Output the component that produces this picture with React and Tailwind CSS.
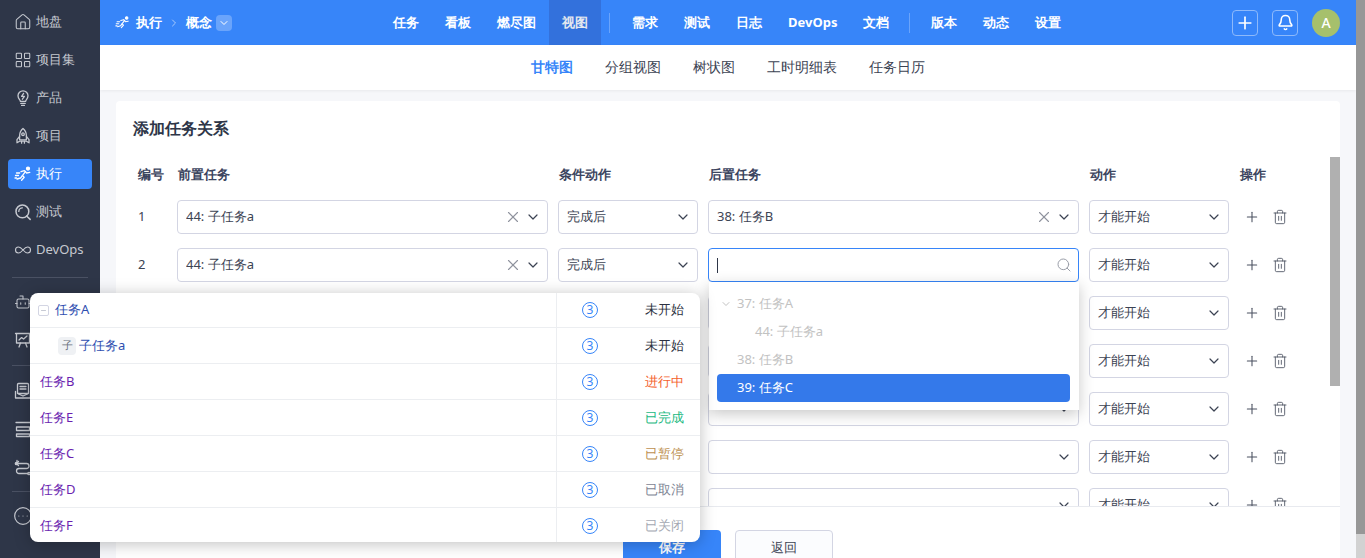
import React from "react";
import {
  Home,
  LayoutGrid,
  Infinity as InfinityIcon,
  Bot,
  Search,
  CircleEllipsis,
  ChevronDown,
  ChevronRight,
  X,
  Plus,
  Trash2,
  Bell,
  Minus,
} from "lucide-react";

const FONT = "font-['Roboto','Noto_Sans_CJK_SC',sans-serif]";

function Icon({ size = 18, children }) {
  return (
    <svg width={size} height={size} viewBox="0 0 18 18" fill="none" stroke="currentColor" strokeWidth="1.3" strokeLinecap="round" strokeLinejoin="round" className="shrink-0">
      {children}
    </svg>
  );
}

// sprinter used for 执行
function Runner({ size = 18 }) {
  return (
    <Icon size={size}>
      <circle cx="14" cy="3.6" r="1.5" fill="currentColor" />
      <path d="M15.8 7.4 12.6 8 10.4 5.6 7 6.6" />
      <path d="M11.6 6.4 8.4 10.6l1.8 1.6-2.6 3" />
      <path d="M8.4 10.6 6.6 13 3 14" />
      <path d="M1.5 10.5h3M2.5 8h3.2M1 13h1.5" />
    </Icon>
  );
}

function Bulb() {
  return (
    <Icon>
      <path d="M6.4 12.4c0-1.4-2.4-2.6-2.4-5.6a5 5 0 0 1 10 0c0 3-2.4 4.2-2.4 5.6z" />
      <path d="M9.6 4.4 7.6 7.4h2.8l-2 2.8" />
      <path d="M6.8 14.4h4.4M7.6 16.4h2.8" />
    </Icon>
  );
}

function UprightRocket() {
  return (
    <Icon>
      <path d="M9 1.4c2.4 2 3.4 4.6 3.4 7.2v4.2H5.6V8.6C5.6 6 6.6 3.4 9 1.4z" />
      <circle cx="9" cy="7.2" r="1.3" />
      <path d="M5.6 9.4 3 12.6v3.2l2.6-1.6h6.8l2.6 1.6v-3.2l-2.6-3.2" />
      <path d="M7.6 14.4v1.8M10.4 14.4v1.8" />
    </Icon>
  );
}

function TestLens() {
  return (
    <Icon>
      <circle cx="8.4" cy="8.4" r="6.4" strokeWidth="1.5" />
      <path d="M4.8 8.4a3.6 3.6 0 0 1 3.6-3.6" />
      <path d="m12.6 13 3.6 3.4" strokeWidth="1.5" />
    </Icon>
  );
}

function Board() {
  return (
    <Icon>
      <path d="M1.5 2.5h15M2.5 2.5v9.5h13V2.5" />
      <path d="m5 9 2.6-2.4 2 1.4L13 5" />
      <path d="M6.5 12 5 16M11.5 12l1.5 4" />
    </Icon>
  );
}

function Tray() {
  return (
    <Icon>
      <rect x="3.5" y="1.5" width="11" height="10" rx="1" />
      <path d="M6 4.5h6M6 7h6" />
      <path d="M1.5 9.5v6.5h15V9.5M3.5 11.5 9 14l5.5-2.5" />
    </Icon>
  );
}

function Stack() {
  return (
    <Icon>
      <path d="M2 2.5h14M2.5 7h13v3.5h-13zM2.5 14h13v2.5h-13z" />
    </Icon>
  );
}

function Flow() {
  return (
    <Icon>
      <path d="M3 2.5v1.5M3 5.5h9.5a2.5 2.5 0 0 1 0 5H5a2.5 2.5 0 0 0 0 5h9" />
      <circle cx="2.5" cy="5.5" r="1.2" fill="currentColor" />
      <circle cx="15" cy="15.5" r="1.2" />
      <path d="M4.5 3.5 2.5 5.5l2 2" />
    </Icon>
  );
}

const menus = [
  { name: "地盘", icon: <Home size={18} strokeWidth={1.4} /> },
  { name: "项目集", icon: <LayoutGrid size={18} strokeWidth={1.4} /> },
  { name: "产品", icon: <Bulb /> },
  { name: "项目", icon: <UprightRocket /> },
  { name: "执行", icon: <Runner />, active: true },
  { name: "测试", icon: <TestLens /> },
  { name: "DevOps", icon: <InfinityIcon size={18} strokeWidth={1.5} />, latin: true },
];

function SideItem({ item }) {
  return (
    <div className={`mx-2 h-[30px] mb-2 shrink-0 flex items-center gap-[4px] pl-[6px] rounded text-[13px] ${item.latin ? "font-normal" : "font-medium"} ${item.active ? "bg-[#3785f9] text-white" : "text-[#c6c9d0]"}`}>
      {item.icon}
      {item.name && <span>{item.name}</span>}
    </div>
  );
}

// icons only below this point: their labels sit behind the task popup
function Sidebar() {
  return (
    <div className="w-[100px] shrink-0 h-full bg-[#2e3648] pt-[7px] flex flex-col">
      {menus.map((m) => <SideItem key={m.name} item={m} />)}
      <div className="mx-3 border-t border-[#4a5163] mt-[4px] mb-[9px]" />
      <SideItem item={{ icon: <Bot size={18} strokeWidth={1.4} /> }} />
      <SideItem item={{ icon: <Board /> }} />
      <div className="mx-3 border-t border-[#4a5163] mt-[2px] mb-[10px]" />
      <SideItem item={{ icon: <Tray /> }} />
      <SideItem item={{ icon: <Stack /> }} />
      <SideItem item={{ icon: <Flow /> }} />
      <div className="mx-3 border-t border-[#4a5163] mt-[1px]" />
      <div className="pl-[13px] pt-[14px] text-[#c6c9d0]"><CircleEllipsis size={20} strokeWidth={1.4} /></div>
    </div>
  );
}

function TopNav() {
  const group1 = ["任务", "看板", "燃尽图", "视图"];
  const group2 = ["需求", "测试", "日志", "DevOps", "文档"];
  const group3 = ["版本", "动态", "设置"];
  const item = (t) => (
    <div key={t} className={`h-full flex items-center px-[13px] ${t === "视图" ? "bg-[#3371dc] text-[#e4e8ef]" : ""}`}>{t}</div>
  );
  return (
    <div className="h-[45px] shrink-0 bg-[#3785f9] text-white text-[13px] font-bold flex items-center">
      <div className="w-[280px] shrink-0 flex items-center pl-[15px] gap-[6px]">
        <Runner size={15} />
        <span>执行</span>
        <ChevronRight size={12} className="text-[#a9cbfc]" />
        <span>概念</span>
        <span className="w-4 h-4 rounded-sm bg-[#6aa4fb] flex items-center justify-center -ml-[2px]"><ChevronDown size={12} /></span>
      </div>
      <div className="h-full flex items-center">
        {group1.map(item)}
        <div className="w-px h-5 bg-[#6aa4fb] ml-[8px] mr-[9px]" />
        {group2.map(item)}
        <div className="w-px h-5 bg-[#6aa4fb] ml-[7px] mr-[8px]" />
        {group3.map(item)}
      </div>
      <div className="ml-auto flex items-center gap-[14px] pr-[16px]">
        <span className="w-[26px] h-[26px] rounded border border-[#8db9fb] flex items-center justify-center"><Plus size={20} strokeWidth={2} /></span>
        <span className="w-[26px] h-[26px] rounded border border-[#8db9fb] flex items-center justify-center"><Bell size={17} strokeWidth={2.2} /></span>
        <span className="w-7 h-7 rounded-full bg-[#a6c06c] flex items-center justify-center text-sm font-medium">A</span>
      </div>
    </div>
  );
}

function SubNav() {
  const tabs = ["甘特图", "分组视图", "树状图", "工时明细表", "任务日历"];
  return (
    <div className="h-[45px] shrink-0 bg-white shadow-[0_1px_3px_rgba(0,0,0,0.06)] flex items-center justify-center gap-[32px] pb-[2px] text-[14px] text-[#3c4353]">
      {tabs.map((t, i) => (
        <span key={t} className={i === 0 ? "text-[#3785f9] font-bold" : ""}>{t}</span>
      ))}
    </div>
  );
}

function Select({ value, width, clear, focus }) {
  return (
    <div className={`${width} shrink-0 h-[34px] rounded border bg-white flex items-center text-[13px] text-[#3c4353] pl-2 pr-[6px] ${focus ? "border-[#3785f9]" : "border-[#d3d5e3]"}`}>
      {focus ? <span className="w-px h-[15px] bg-[#2e3648]" /> : <span className="truncate">{value}</span>}
      <span className="ml-auto flex items-center gap-[3px]">
        {clear && <X size={18} strokeWidth={1.5} className="text-[#8f939e]" />}
        {focus ? <Search size={16} strokeWidth={1.5} className="text-[#9a9ea8]" /> : <ChevronDown size={16} strokeWidth={1.8} className="text-[#3c4353]" />}
      </span>
    </div>
  );
}

const rows = [
  { no: 1, pre: "44: 子任务a", cond: "完成后", post: "38: 任务B", clear: true },
  { no: 2, pre: "44: 子任务a", cond: "完成后", focus: true },
  { no: 3 },
  { no: 4 },
  { no: 5 },
  { no: 6 },
  { no: 7 },
];

function RelationRow({ row }) {
  return (
    <div className="flex items-center gap-[10px] h-[34px] mb-[14px] text-[13px] text-[#3c4353]">
      <div className="w-[34px] shrink-0 pl-[5px]">{row.no}</div>
      <Select width="w-[371px]" value={row.pre} clear={!!row.pre} />
      <Select width="w-[140px]" value={row.cond} />
      <Select width="w-[371px]" value={row.post} clear={row.clear} focus={row.focus} />
      <Select width="w-[140px]" value="才能开始" />
      <div className="flex items-center gap-[12px] pl-[5px] text-[#4b5160]">
        <Plus size={16} strokeWidth={1.6} />
        <Trash2 size={16} strokeWidth={1.3} />
      </div>
    </div>
  );
}

function Card() {
  return (
    <div className="mx-[16px] mt-[11px] bg-white rounded-t h-[470px] relative overflow-hidden">
      <div className="pl-[17px] pt-[15px] h-[56px] text-[16px] font-bold text-[#2e3648]">添加任务关系</div>
      <div className="pl-[17px] pt-[8px] flex text-[13px] font-bold text-[#3c4560] h-[43px] items-start">
        <div className="w-[5px]" />
        <div className="w-[40px]">编号</div>
        <div className="w-[381px]">前置任务</div>
        <div className="w-[150px]">条件动作</div>
        <div className="w-[381px]">后置任务</div>
        <div className="w-[150px]">动作</div>
        <div>操作</div>
      </div>
      <div className="pl-[17px]">
        {rows.map((r) => <RelationRow key={r.no} row={r} />)}
      </div>
      <div className="absolute right-0 top-[56px] w-[10px] h-[229px] bg-[#b0b0b0]" />
      <div className="absolute left-0 right-0 top-[405px] bottom-0 bg-white border-t border-[#e8eaef] flex gap-[14px] pl-[507px] pt-[23px]">
        <button className="w-[98px] h-[36px] rounded bg-[#3785f9] text-white text-[13px] font-bold">保存</button>
        <button className="w-[98px] h-[36px] rounded border border-[#d3d5e3] bg-[#fbfcfe] text-[#3c4353] text-[13px]">返回</button>
      </div>
    </div>
  );
}

function TaskDropdown() {
  return (
    <div className="absolute left-[709px] top-[282px] w-[370px] h-[128px] bg-white shadow-[0_4px_14px_rgba(0,0,0,0.22)] text-[13px] text-[#c2c2c2] pl-2 pr-[9px] pt-2">
      <div className="h-7 flex items-center pl-[3px] gap-[5px]"><ChevronDown size={12} />37: 任务A</div>
      <div className="h-7 flex items-center pl-[38px]">44: 子任务a</div>
      <div className="h-7 flex items-center pl-[20px]">38: 任务B</div>
      <div className="h-7 flex items-center pl-[20px] bg-[#3479ea] text-white rounded-sm">39: 任务C</div>
    </div>
  );
}

const tasks = [
  { name: "任务A", status: "未开始", color: "text-[#2c3140]", tree: true, text: "text-[#2f4fb0]" },
  { name: "子任务a", status: "未开始", color: "text-[#2c3140]", child: true, text: "text-[#2f4fb0]" },
  { name: "任务B", status: "进行中", color: "text-[#f4622d]" },
  { name: "任务E", status: "已完成", color: "text-[#1ab97f]" },
  { name: "任务C", status: "已暂停", color: "text-[#bd9050]" },
  { name: "任务D", status: "已取消", color: "text-[#7d8494]" },
  { name: "任务F", status: "已关闭", color: "text-[#a4a8b2]" },
];

function TaskPopup() {
  return (
    <div className="absolute left-[30px] top-[293px] w-[670px] h-[249px] bg-white rounded-lg overflow-hidden shadow-[0_2px_16px_rgba(0,0,0,0.25)] text-[13px]">
      {tasks.map((t, i) => (
        <div key={t.name} className={`flex items-center ${i === 0 ? "h-[35px]" : "h-[36px]"} ${i < tasks.length - 1 ? "border-b border-[#eceef1]" : ""}`}>
          <div className={`w-[527px] h-full flex items-center border-r border-[#eceef1] ${t.tree ? "pl-[8px] gap-[6px]" : "pl-[10px] gap-[3px]"} ${t.text || "text-[#6a1fb0]"}`}>
            {t.tree && <span className="w-[11px] h-[11px] border border-[#d3d5e3] rounded-[2px] flex items-center justify-center text-[#9ea3b5]"><Minus size={7} /></span>}
            {t.child && <span className="ml-[18px] w-[18px] h-[18px] rounded bg-[#eff1f4] text-[#6b7280] text-[11px] flex items-center justify-center">子</span>}
            <span>{t.name}</span>
          </div>
          <div className="w-[66px] flex justify-center">
            <span className="w-4 h-4 rounded-full border border-[#3785f9] text-[#3785f9] text-[12px] flex items-center justify-center">3</span>
          </div>
          <div className={`flex-1 text-right pr-[16px] ${t.color}`}>{t.status}</div>
        </div>
      ))}
    </div>
  );
}

export default function App() {
  return (
    <div className={`${FONT} w-full h-screen overflow-hidden relative flex bg-[#f6f7fa]`}>
      <Sidebar />
      <div className="flex-1 min-w-0 h-full flex flex-col overflow-hidden">
        <TopNav />
        <SubNav />
        <Card />
      </div>
      <div className="w-[9px] shrink-0 h-full flex flex-col">
        <div className="h-[534px] bg-[#979797]" />
        <div className="flex-1 bg-[#d2d2d2]" />
      </div>
      <TaskDropdown />
      <TaskPopup />
    </div>
  );
}
